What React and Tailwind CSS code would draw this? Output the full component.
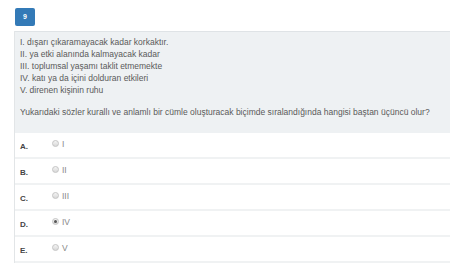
const ITEMS = [
  'I. dışarı çıkaramayacak kadar korkaktır.',
  'II. ya etki alanında kalmayacak kadar',
  'III. toplumsal yaşamı taklit etmemekte',
  'IV. katı ya da içini dolduran etkileri',
  'V. direnen kişinin ruhu',
];

const OPTIONS = [
  { key: 'A', label: 'I' },
  { key: 'B', label: 'II' },
  { key: 'C', label: 'III' },
  { key: 'D', label: 'IV', checked: true },
  { key: 'E', label: 'V' },
];

export default function App() {
  return (
    <div className="w-[450px] h-[265px] bg-white overflow-hidden font-['Liberation_Sans',Arial,sans-serif]">
      <div className="pl-[15px] pt-[8px] pb-[5px]">
        <div className="w-[20px] h-[18px] bg-[#337ab7] rounded-[2px] flex items-center justify-center text-white text-[7px] font-bold">
          9
        </div>
      </div>

      <div className="ml-[14px] border-l border-[#e2e5e7]">
        {/* soru metni */}
        <div className="bg-[#eef1f3] border-t border-[#dfe3e6] pl-[5px] pt-[4px] h-[102px] text-[8.5px] leading-[12px] text-[#5a5a5a]">
          {ITEMS.map(line => (
            <div key={line}>{line}</div>
          ))}
          <div className="mt-[10px]">
            Yukarıdaki sözler kurallı ve anlamlı bir cümle oluşturacak biçimde sıralandığında hangisi baştan üçüncü olur?
          </div>
        </div>

        {/* şıklar */}
        {OPTIONS.map(opt => (
          <div key={opt.key} className="h-[26px] flex items-center border-b-2 border-[#f0f2f3]">
            <span className="w-[37px] pl-[5px] pt-[3px] text-[8px] font-bold text-[#444]">{opt.key}.</span>
            <span className="w-[7px] h-[7px] rounded-full border border-[#c4c4c4] bg-gradient-to-b from-[#f4f4f4] to-[#d8d8d8] flex items-center justify-center mb-[3px]">
              {opt.checked && <span className="w-[3px] h-[3px] rounded-full bg-[#555]" />}
            </span>
            <span className="ml-[3px] text-[8.5px] text-[#888] mb-[1px]">{opt.label}</span>
          </div>
        ))}
      </div>
    </div>
  );
}
